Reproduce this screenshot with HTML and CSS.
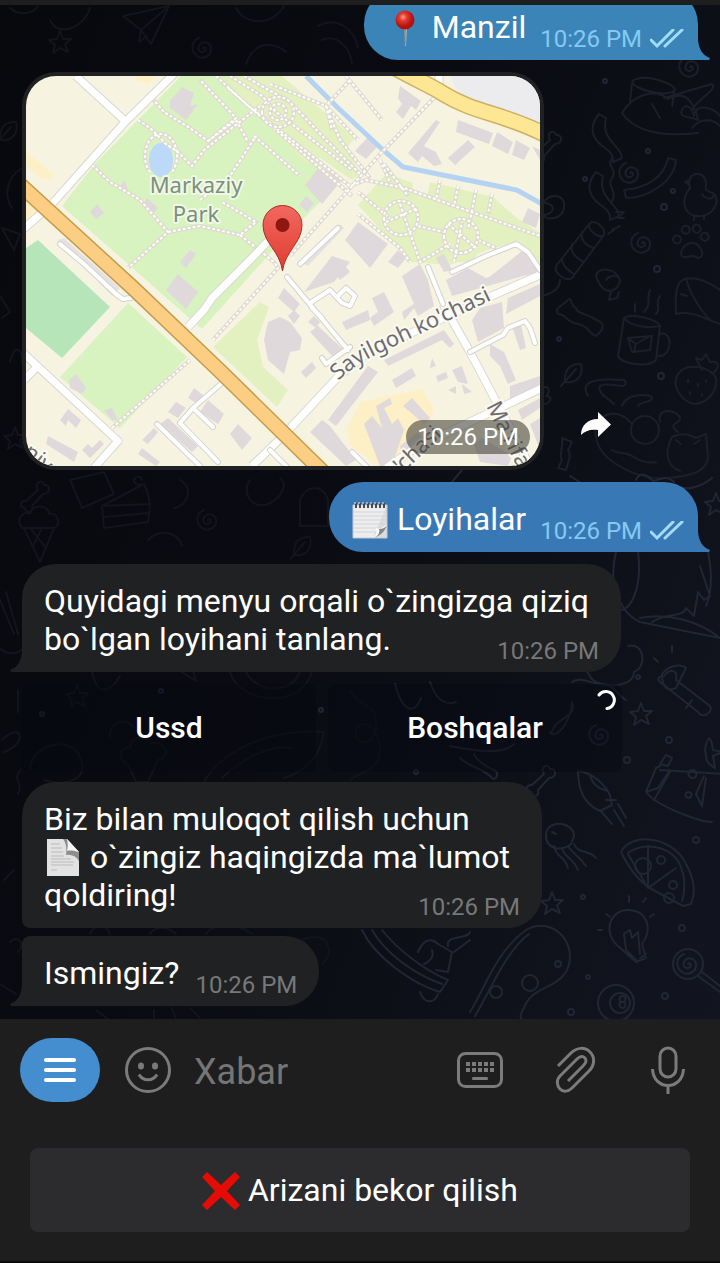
FILE: index.html
```html
<!DOCTYPE html>
<html lang="uz">
<head>
<meta charset="utf-8">
<meta name="viewport" content="width=device-width, initial-scale=1">
<title>Chat</title>
<link rel="stylesheet" href="styles.css">
</head>
<body>
<main class="app">
  <div class="topbar"></div>
  <section class="chat">
    <svg class="wallpaper" viewBox="0 5 720 1014" preserveAspectRatio="xMaxYMax slice" aria-hidden="true">
      <defs>
        <path id="d-star" d="M0-11 3-3 11-3 5 2 8 10 0 6-7 11-5 3-11-2-3-3Z"/>
        <path id="d-spiral" d="M0 0c2-2 4 1 2 3-4 3-8-1-6-5 3-6 11-4 12 2 1 8-8 12-14 8-7-5-6-15 2-18"/>
        <path id="d-bone" d="M-14 9-2-2C-7-10 3-13 4-7 11-8 11 2 3 2L-8 14C-6 22-15 21-15 16-21 16-20 8-14 9Z"/>
        <path id="d-leaf" d="M-8 10C-9-3-2-9 8-8 11 4 3 12-8 10ZM-12 14 3-3"/>
        <path id="d-ribbon" d="M-4-24c-12 14-6 26 6 34 6 4 9 8 8 14l9-4c0-12-22-18-16-40Z"/>
        <path id="d-paw" d="M0 1c7 0 13 10 9 14-5 3-5-2-9-1-4 0-7 3-10 0-3-5 3-13 10-13ZM-11-2a4 4 0 1 1 0-1M-4-9a4 4 0 1 1 1-1M7-10a4 4 0 1 1 1-1M15-2a4 4 0 1 1 1-1"/>
        <path id="d-plane" d="M-22-8 24-18 6 20-4 6ZM24-18-4 6-6 18 2 12"/>
        <path id="d-ice" d="M-14-4 2 30 16-4ZM-16-4c-8-10 4-18 8-14 2-10 18-10 19 0 10-2 12 12 5 14ZM-8-4 8 16M4-4-5 14"/>
        <path id="d-cake" d="M-24 0 18-22C24-10 25 0 22 16L-22 22ZM-24 0 24-2M-22 11 23 7M14-22a4 4 0 1 1 2-4"/>
      </defs>
      <g class="doodle doodle--dim">
        <path d="M10 8c8 8 24 6 28-2M90 8c-6 20-32 30-40 12M236 8c10 18 36 18 48-2"/>
        <use href="#d-plane" x="145" y="24"/><use href="#d-spiral" x="203" y="48"/>
        <path d="M246 64c8-22 26-24 40-12M318 26c18-10 36 2 40 22M322 40c14-6 28 6 30 24"/>
        <use href="#d-star" x="60" y="42"/><use href="#d-leaf" x="8" y="130"/>
        <path d="M22 168C6 178 4 196 12 208M2 228l18 6-6 16ZM0 296l10 16-8 6M10 362c6-22 14-10 12 2"/>
        <use href="#d-star" x="15" y="438"/><use href="#d-bone" x="40" y="492"/>
        <use href="#d-cake" x="126" y="506"/><use href="#d-spiral" x="208" y="520"/>
        <path d="M250 480c-10 14 4 30 18 24s20-20 12-26M300 500c6-16 24-16 28 0v26h-28Z"/>
        <path d="M70 480l34-8 10 22-32 14ZM180 480c14 8 8 26-6 28M148 540c12-12 30-8 34 6"/>
        <use href="#d-ice" x="38" y="532"/><use href="#d-leaf" x="302" y="545"/>
        <path d="M0 600l14 34M6 592l12 42M0 648c8 8 18 6 24 0M2 740c20-20 26 4 2 12M18 690v22M20 770c-8 12 4 12-2 24"/>
        <path d="M92 672c6 26 18 20 28 4M182 672l14 9-4-14M230 672c8 30 70 40 82 0M246 672c10 20 44 24 54 0"/>
        <use href="#d-star" x="77" y="696"/>
        <path d="M30 770c0-26 44-38 52-8 4 20-20 24-38 18M110 738c-2-16 16-22 24-10M128 764l8 18h12l10-22c16-4 4-22-8-16-4-10-20-8-20 4-12-2-12 14-2 16Z"/>
        <path d="M204 782c16-28 60-54 120-50-4 26-20 40-40 46M222 778c20-20 50-34 70-30"/>
        <path d="M350 690c10 20 28 12 26 36s-24 18-20 4 24-2 24 20-22 22-30 30"/>
        <path d="M90 934c6-12 16-10 20 0M150 934c4-8 18-8 26 0M206 934c6-10 30-12 46 0M4 880l10-10M0 984l16 10"/>
        <path d="M10 942c8-8 16 2 8 10M302 940c26-12 34 14 20 24M96 1010l12 9M154 1010v9M172 1008l4 11M190 1008l10 10"/>
      </g>
      <g class="doodle">
        <use href="#d-spiral" x="690" y="67"/>
        <path d="M632 82c6-10 42 0 43 8-8 8-40 0-43-8ZM632 84l-2 18M674 92l-2 14M622 113c12-20 34-24 46-14 18-10 26 4 30 20M622 113c14 20 42 24 76 20M652 104l8 14M664 98c14-4 40-12 48-14 6 6-14 14-20 26"/>
        <path d="M698 120c-8-4-20-2-16-10s10-2 12 6c2-14 20-8 26 0M692 128c8-10 20-10 28-2"/>
        <use href="#d-bone" x="552" y="142"/><use href="#d-ribbon" x="603" y="138"/>
        <use href="#d-ribbon" x="600" y="196"/>
        <path d="M668 158l8 2c-2 22-28 38-50 38l-2-8c22-2 40-12 44-32ZM612 158c-6 8 6 12 0 20s6 12 0 24"/>
        <use href="#d-spiral" x="630" y="173"/>
        <path d="M690 188c-6-16 16-20 16-4 0 4-2 6 4 8 14 4 4 26-12 24-14 0-18-16-8-28ZM690 180l-5 2 4 3M702 194c4 6 12 6 12 0M694 216v4M704 215v4"/>
        <path d="M544 202c4-8 22-10 20 6-2 12-18 12-20 8M542 215c14 0 14-12 2-12"/>
        <path d="M590 223c6-4 16 6 14 12L572 278c-6 4-18-4-16-12ZM590 223c-4 6 8 16 14 12M582 232c-2 8 4 14 12 16M572 244c-2 8 4 14 12 18M562 258c0 8 6 12 12 16M560 280c0 10-10 14-18 16"/>
        <path d="M616 212h8l-6 6h6M612 230l8-4M608 234l6-4"/>
        <use href="#d-spiral" x="642" y="243"/><use href="#d-paw" x="692" y="242"/>
        <path d="M596 276c2-10 20-8 24 4 0 10-16 20-24-4ZM606 280c2-4 10-6 13-2M611 292l-2 8 8-2 2-6"/>
        <path d="M568 300c4-4 2 6 8 8 0 6 14 6 20 12 8 2 10 8 0 16-8-2-6-10-18-12s-12-10-20-10c-4-6 4-8 10-14Z"/>
        <path d="M624 318c8-6 34 2 36 8l-4 34c-8 8-34 4-38-4ZM624 318c8 10 28 10 36 8M660 334c14-4 12 24-2 22M628 338l24-2-2 14-18 2ZM628 338l8 6 14-8M636 344l-2 8M644 312c8-8 2-14 6-22M656 314c6-6-2-10 4-18M635 312v-8"/>
        <path d="M720 290c-14-10-30-16-40-8-6 8-4 24-4 32 18-4 30 6 44 10M686 278c4 18 18 36 24 42M681 294l6 2"/>
        <use href="#d-leaf" x="573" y="372"/>
        <path d="M588 396c-8-14 4-18 36-16 4 4 0 6-2 6-16-2-28-4-20 8 4 4 8 6 12 10M622 406c4-14 30-12 30-8-2 6-10 2-14 8"/>
        <path d="M678 374c8-12 32-8 38 4 2 16-12 26-22 26-10-2-24-16-16-30ZM702 370l-6-12 6 2 4-6 4 8c10-2 10 6 2 12M688 380v2M698 384v2M706 380v2M690 392v2M702 394v2"/>
        <circle cx="645" cy="430" r="14"/>
        <path d="M660 422c-4-20 28-8 18 0-6 2-6 6 0 10M632 424c-16-20-40-8-36 12 2 24 40 44 70 42s40-8 42-20l-2-24-10 4c-10-6-18-4-24-1-10 20-2 30 8 34M676 440l5 4M694 444l6-4M612 450c6 4 14 2 20 6s14 8 24 6"/>
        <path d="M562 438l10 4-4 8c4 6 0 12-2 20l-8-2 4-8c-4-6 2-12 0-22Z"/>
        <path d="M540 390c8-8 12 2 6 6 8 0 4 8-2 8"/>
      </g>
      <g class="doodle doodle--bright">
        <path d="M636 480c4-10 12-4 16 0s12-8 22 2M674 484c10 8 26 4 38-6M452 482l10-12M570 476l16 10"/>
        <use href="#d-star" x="716" y="504"/>
        <path d="M616 552c-10 40 10 64 24 70l80 16M638 552c4 30-4 54-16 58M700 566l10 30-6 4-6-8-4 24-8-8c-2 10-20 4-34 14M708 552c4 20 4 40-2 54M640 618c30-6 60 4 80 20"/>
        <path d="M628 646c16-4 20 20 6 26 0 18-40 16-44 4-6-8-2-8-2-12M662 674c8-10 20-10 24-6l-10 20c-8 4-14 0-14-14ZM658 662l-4-4M672 652v-6"/>
        <path d="M664 676c8-10 14-4 12 4l34 26c4 6-8 14-12 6L660 682c-4-4 0-6 4-6M692 700l-6 8"/>
        <use href="#d-star" x="641" y="714"/><path d="M705 750c2-14 6-16 8 0l10 2-10 4 2 12c-10-6-8-8-10-18Z"/>
        <path d="M395 684c8 30 20 30 26 14M430 682c6 18 16 24 26 20M450 746c22 4 52 10 64-2M460 758c10 10 24 10 32 20 4 4 8-6 2-8s-18-10-20-16M552 732c4-16 26-14 20-30-2 24-18 38-22 30ZM572 682c10-6 18 2 30 2s14 10 24 16"/>
        <use href="#d-spiral" x="600" y="735"/><use href="#d-bone" x="546" y="776"/>
        <path d="M578 771c14 2 26 12 32 24l2 10-12 6c-14-6-22-20-22-40ZM590 775c2 8 8 14 18 16M600 810l12 14M614 810l10 16M606 800l10 0M618 804l8 14"/>
        <path d="M660 770 722 774M656 768l-10 24c10 14 54 30 66 30M670 772l-16 28M646 792l12-4 12-18M660 764l6-9 6 3-4 8ZM704 776l-8 18 6 12 4-28M656 768l4-2M692 778a4 4 0 1 1 1 0M688 798a3 3 0 1 1 1 0"/>
        <path d="M546 834c2-16 28-12 28 2l-3 8c-8 8-26 6-25-10ZM552 832l4 2M554 846c2 12 10 8 14 22M562 848c2 10 10 8 16 22M568 846c6 10 10 8 18 20M574 844c4 10 16 6 22 14"/>
        <path d="M621 852c10-20 50-16 64 10 8 14 12 28 6 42l-8 2-26-14c-16-8-26-20-36-40ZM628 853c20-14 50-4 54 18 4 8 2 24 0 30M648 846v42l28-20M648 888l-20-34"/>
        <circle cx="643" cy="866" r="8"/><circle cx="673" cy="885" r="4"/><circle cx="661" cy="860" r="4"/><circle cx="669" cy="898" r="5"/>
        <use href="#d-star" x="552" y="903"/>
        <path d="M618 946c-16-14-8-36 10-36s26 18 14 34l4 14-10 4ZM624 934l2 16 10 10M624 934l6-4 2 8 6-6 2 22M640 958l6-4M629 902v-6M610 917l-4-3M643 902l3-4M602 930h-4M650 917l4-3"/>
        <circle cx="688" cy="964" r="15"/><use href="#d-spiral" x="688" y="964"/><path d="M702 972l18 14M698 976l22 16"/>
        <circle cx="616" cy="1003" r="18"/><circle cx="620" cy="1003" r="10"/><path d="M622 1002a3 3 0 1 1 1 0a3 3 0 1 1-1 0"/>
        <path d="M470 1012c16-26 26-60 56-82 28-16 54 16 40 42-12 18-34 14-42 36-4 6-4 10-2 12M475 1016c16-26 30-64 54-82"/>
        <circle cx="530" cy="983" r="8"/><circle cx="496" cy="992" r="6"/>
        <path d="M362 930c12 26 50 54 78 62l8-12c-24-10-50-30-66-50M372 930c14 24 42 44 70 54M420 992c4 12 14 12 18 2M418 952c6-14 14-14 20-8l14 8-4 20-12-2M424 964c8-4 10-8 8-14M448 946c-2-12 20-6 22-14M454 952l16-12"/>
      </g>
      <g class="doodle doodle--bright">
        <circle cx="605" cy="81" r="2"/><circle cx="648" cy="151" r="2"/><circle cx="585" cy="179" r="2"/><circle cx="673" cy="191" r="2"/><circle cx="664" cy="207" r="3"/><circle cx="657" cy="269" r="3"/><circle cx="559" cy="339" r="2"/><circle cx="661" cy="376" r="3"/>
        <circle cx="669" cy="740" r="3"/><circle cx="627" cy="760" r="3"/><circle cx="416" cy="772" r="2"/><circle cx="696" cy="840" r="3"/><circle cx="583" cy="897" r="2"/><circle cx="682" cy="928" r="3"/><circle cx="558" cy="964" r="3"/><circle cx="588" cy="977" r="2"/><circle cx="665" cy="996" r="3"/><circle cx="571" cy="1012" r="3"/><circle cx="161" cy="691" r="2"/><circle cx="321" cy="710" r="2"/><circle cx="42" cy="714" r="2"/><circle cx="638" cy="677" r="2"/>
      </g>
    </svg>

    <div class="feed">
      <article class="bubble bubble--out bubble--first">
        <p class="bubble__text"><svg class="emoji" viewBox="0 0 38 38" role="img" aria-label="📍"><defs><radialGradient id="pinball" cx=".4" cy=".35"><stop offset="0" stop-color="#ff9a8a"/><stop offset=".4" stop-color="#e23b32"/><stop offset="1" stop-color="#b3120f"/></radialGradient></defs><path d="M18 17h3l-1 20h-1Z" fill="#b9b9bd"/><path d="M18 19h1v17" stroke="#77777c" fill="none"/><circle cx="19" cy="11" r="9.500" fill="url(#pinball)"/></svg> Manzil</p>
        <span class="meta">10:26 PM <svg class="checks" viewBox="0 0 34 20" role="img" aria-label="read"><path d="M1 11l6 6L23 1M15 17 32 1"/></svg></span>
        <svg class="tail" viewBox="0 0 12 20" aria-hidden="true"><path d="M0 0C1 9 4 15 12 18L11 20H0Z"/></svg>
      </article>

      <div class="map-row">
        <figure class="map-card">
          <svg class="map" viewBox="26 76 514 390" preserveAspectRatio="xMidYMid slice" role="img" aria-label="Markaziy Park">
            <rect class="m-land" x="26" y="76" width="514" height="390"/>
            <path fill="#ececef" d="M450 76h90v54l-40-18-40-14Z"/>
            <path fill="#fdf0c6" d="M26 152 54 174 50 181 40 178 26 166ZM136 76l20 0-8 8-14-4ZM26 196 40 210 26 224Z"/>
            <path fill="#fdf0c6" d="M360 402 422 389 434 408 424 440 378 466 350 445 347 428Z"/>
            <path class="m-park" d="M181 76h60L322 168 332 190 282 240 202 329 187 316 62 206 94 165Z"/>
            <path class="m-park" d="M128 303 187 357 120 428 60 377Z"/>
            <path fill="#b6e5b9" d="M38 240 110 307 62 358 26 328V248Z"/>
            <path class="m-grass" d="M224 76h58l73 62-7 8 12 28-8 6-32-22-14 6-50-50Z"/>
            <path class="m-grass" d="M260 302 269 307 257 340 263 367 288 390 277 407 213 347Z"/>
            <path class="m-grass" d="M358 205 387 173 413 183 412 193 427 197 430 182 493 197 517 218 540 233V258L517 242 487 250 450 265 410 262 393 243Z"/>
            <path class="m-grass" d="M455 262 478 252 474 262ZM540 240v24l-14-16Z"/>
            <path fill="#e4e1e0" d="M58 240 64 238 120 288 112 296ZM300 262 340 224 344 228 308 266Z"/>
            <path class="m-bldg" d="M170 101 182 87 194 93 190 106 198 104 186 120 170 108ZM97 204 104 213 96 219 90 212ZM124 180 128 190 118 190ZM147 198 158 208 152 214 142 206ZM190 250 196 254 186 268 180 262ZM178 274 198 292 186 309 166 290ZM305 185 320 166 342 180 322 204ZM306 196 314 203 307 212 299 205Z"/>
            <path class="m-bldg" d="M400 86 421 101 416 110 411 106 403 119 396 112 402 104 398 98ZM355 151 368 137 378 146 366 159ZM436 120 440 122 424 146 436 152 442 164 434 166 422 156 418 162 408 153ZM458 120 493 133 489 144 456 132ZM497 132 513 142 508 154 492 146ZM516 140 530 148 524 160 512 155ZM448 158 468 140 475 147 455 165ZM532 146 540 150V160ZM528 208 540 214 536 228 522 222Z"/>
            <path class="m-bldg" d="M345 240 358 222 388 244 370 268ZM388 262 398 250 406 258 398 268ZM436 258 444 254 452 270 444 272ZM488 278 526 248 536 262 488 282ZM304 292 332 256 350 262 334 282 322 286ZM334 272 344 264 350 272 340 280ZM278 298 284 288 300 304 294 312ZM372 298 384 292 394 312 374 326 370 318 378 312ZM342 322 368 310 370 320 346 330Z"/>
            <path class="m-bldg" d="M268 322 280 317 290 322 302 338 300 350 290 352 284 374 268 360 264 340ZM310 332 318 326 346 352 334 358ZM301 372 312 362 316 368 306 378ZM288 316 294 310 300 316 294 324ZM308 322 314 316 320 322 316 328ZM402 276 420 264 428 280 434 306 418 316 414 308 404 320 402 312 414 304Z"/>
            <path class="m-bldg" d="M446 280 468 268 486 278 538 262V272L452 296ZM508 298 540 284V296L506 314ZM472 320 480 308 502 302 504 328 478 342ZM384 360 444 330 454 344 450 348 442 340 388 366ZM328 420 368 366 378 372 336 426ZM392 380 412 368 416 376 396 388ZM432 358 436 366 430 368ZM452 370 462 366 468 384 458 382ZM436 376 446 372 448 378 438 382ZM448 390 456 386 456 394ZM462 384 472 392 464 394ZM490 344 504 352 516 380 508 384 500 366 490 356ZM512 326 520 320 526 348 520 350ZM510 386 540 376V388L510 400ZM518 410 540 398V408L522 420Z"/>
            <path class="m-bldg" d="M310 432 322 420 330 426 356 460 346 466ZM364 424 372 416 382 428 376 406 390 398 392 404 384 408 392 424 398 418 404 430 392 466H380ZM403 406 412 398 430 418 424 424ZM474 444 482 438 512 456 508 466 480 462ZM400 446 418 432 426 442 404 460ZM530 424 540 418V450Z"/>
            <path class="m-bldg" d="M69 380 76 374 86 388 82 394 70 388ZM104 410 112 408 118 420 112 420ZM60 420 68 409 81 420 76 428 68 420 66 426ZM48 436 78 452 74 462 46 444ZM82 450 88 444 92 448 100 440 104 444 90 458ZM142 440 154 428 158 432 148 444ZM138 454 142 448 160 462 156 466ZM168 412 176 402 186 408 178 418ZM188 398 194 388 204 396 198 404ZM160 424 168 418 198 446 192 452ZM200 412 208 400 224 414 218 424ZM230 434 238 424 252 438 242 450Z"/>
            <ellipse class="m-water" cx="161" cy="160" rx="12" ry="17"/>
            <path class="m-river" d="M306 76 337 107 383 150 403 167 517 190 542 204"/>
            <g class="m-path-case"><path id="walks" d="M152 98 164 112 190 128 208 141 236 118 200 80M138 120 150 128 166 144 178 152 192 166 204 150 260 106M208 141 236 120 248 142M92 165 110 182 140 200 168 232 128 268M168 232 200 226 240 235 256 222 222 202M240 235 274 262 278 268 213 340M112 428 190 360M150 172a16 22 0 1 1 22 0M200 200 230 176 256 136M254 136 300 176M216 76 246 104 350 186 366 180 404 188 460 208 540 236M230 76 262 96 276 112 352 170M244 76 290 102 326 140 362 176M270 84 326 106 358 140M228 88 352 196M350 80 326 106 332 130M346 76 382 120M434 98 382 152 290 256M326 106 340 140 370 178M380 160 390 182M384 164 408 196M440 180 436 200M458 186 454 206M476 190 468 230M492 194 488 214M358 192 392 220M418 226 444 232M478 240 496 248M358 214 400 248 410 262"/></g>
            <use class="m-path" href="#walks"/>
            <g class="m-path-case"><path id="rings" d="M270 112a8 8 0 1 0 16 0a8 8 0 1 0-16 0M262 112a16 15 0 1 0 32 0a16 15 0 1 0-32 0M384 218a17 17 0 1 0 34 0a17 17 0 1 0-34 0M444 236a17 17 0 1 0 34 0a17 17 0 1 0-34 0M400 204 420 262 450 244M386 222 418 208M454 262 462 222M448 224 476 248"/></g>
            <use class="m-path" href="#rings"/>
            <g class="m-road-case"><path id="roads" d="M176 72 125 122 52 204 20 232M76 76 124 120M20 350 118 441 94 468M37 367 24 380M270 239 250 260 212 298 204 310 188 327M252 466 282 437 337 378 366 354 487 298 542 274M443 304 470 352 497 403 532 470M542 388 470 422 417 447 386 468M439 72V90"/></g>
            <use class="m-road" href="#roads"/>
            <g class="m-lane-case"><path id="lanes" d="M60 244 84 264 117 295 123 299 131 298M222 383 193 408 180 423 218 462M193 408 213 427M157 424 200 466M270 450 290 470M287 277 348 350M322 358 326 364 350 347M310 303 330 290 342 303 350 306 355 296 346 288 338 296M312 308 322 318M470 352 503 335 508 328 525 321 530 328 535 343M428 267 443 304M338 228 300 264M352 452 370 470M452 272 486 256 516 244 528 252 540 270"/></g>
            <use class="m-lane" href="#lanes"/>
            <path fill="none" stroke="#cdb163" stroke-width="17" d="M388 64C420 82 432 86 442 93 476 114 500 112 544 134"/>
            <path fill="none" stroke="#fde795" stroke-width="14" d="M388 64C420 82 432 86 442 93 476 114 500 112 544 134"/>
            <path fill="none" stroke="#c49c4d" stroke-width="16" d="M16 181 133 288 220 371 325 474"/>
            <path fill="none" stroke="#fcce84" stroke-width="13" d="M16 181 133 288 220 371 325 474"/>
            <defs>
              <path id="p-sayilgoh" d="M338 381Q356 364 378 354L500 296"/>
              <path id="p-marifat" d="M486 406 530 492"/>
              <path id="p-chasi" d="M402 474 452 426"/>
              <path id="p-niy" d="M22 454 60 486"/>
            </defs>
            <g class="m-label">
              <text class="m-label--park" x="196" y="193" text-anchor="middle">Markaziy</text>
              <text class="m-label--park" x="196" y="222" text-anchor="middle">Park</text>
              <text><textPath href="#p-sayilgoh">Sayilgoh ko'chasi</textPath></text>
              <text><textPath href="#p-marifat">Ma'rifat</textPath></text>
              <text><textPath href="#p-chasi">'chasi</textPath></text>
              <text><textPath href="#p-niy">niy</textPath></text>
            </g>
            <defs><linearGradient id="marker" x2="0" y2="1"><stop offset="0" stop-color="#f2685f"/><stop offset="1" stop-color="#e03c31"/></linearGradient></defs>
            <path d="M282.500 271C280 251 263 243 263 225a19.500 19.500 0 0 1 39 0C302 243 285 251 282.500 271Z" fill="url(#marker)" stroke="#a63129"/>
            <circle cx="282.500" cy="225" r="7" fill="#8e1712"/>
          </svg>
          <figcaption class="map-card__time">10:26 PM</figcaption>
        </figure>
        <button class="share" type="button" aria-label="Share"><svg viewBox="0 0 30 26"><path d="M17 0 30 12.500 17 25V18C9 17 4 19 0 23 0 14 6 7 17 7Z"/></svg></button>
      </div>

      <article class="bubble bubble--out">
        <p class="bubble__text"><svg class="emoji" viewBox="0 0 38 38" role="img" aria-label="🗒️"><path d="M2 4h34v24q-4 6-13 9H2Z" fill="#ededee"/><path d="M36 4v33H22Z" fill="#dcdcde"/><path d="M2 11h34M2 15h34M2 19h34M2 23h34M2 27h32M2 31h27" stroke="#d2d5da" fill="none"/><path d="M20 37c8-3 5-7 5-10 4 2 8-1 11-4-1 7-7 12-16 14Z" fill="#fff"/><path d="M36 24c-2 7-8 12-15 13 7-1 8-7 7-9 3 0 6-1 8-4Z" fill="#85878a"/><path d="M2 37V4h34v33Z" fill="none" stroke="#c7c9cc"/><path d="M5 7V2M9 7V2M13 7V2M17 7V2M21 7V2M25 7V2M29 7V2M33 7V2" stroke="#45484d" stroke-width="2"/><path d="M4 3V1M8 3V1M12 3V1M16 3V1M20 3V1M24 3V1M28 3V1M32 3V1" stroke="#eee"/></svg> Loyihalar</p>
        <span class="meta">10:26 PM <svg class="checks" viewBox="0 0 34 20" role="img" aria-label="read"><path d="M1 11l6 6L23 1M15 17 32 1"/></svg></span>
        <svg class="tail" viewBox="0 0 12 20" aria-hidden="true"><path d="M0 0C1 9 4 15 12 18L11 20H0Z"/></svg>
      </article>

      <div class="group">
        <article class="bubble bubble--in bubble--multi">
          <p class="bubble__text">Quyidagi menyu orqali o`zingizga qiziq<br>bo`lgan loyihani tanlang.</p>
          <span class="meta">10:26 PM</span>
          <svg class="tail" viewBox="0 0 12 20" aria-hidden="true"><path d="M12 0C11 9 8 15 0 18L1 20H12Z"/></svg>
        </article>
        <div class="replies">
          <button class="reply" type="button">Ussd</button>
          <button class="reply" type="button">Boshqalar<svg class="spinner" viewBox="0 0 20 20" aria-hidden="true"><path d="M3 5A8.500 8.500 0 1 1 11 18.500"/></svg></button>
        </div>
      </div>

      <div class="group group--last">
        <article class="bubble bubble--in bubble--multi bubble--start">
          <p class="bubble__text">Biz bilan muloqot qilish uchun<br><svg class="emoji" viewBox="0 0 38 38" role="img" aria-label="📄"><path d="M3 0H23L35 13V37H3Z" fill="#e2e2e2"/><path d="M19 0h4L35 13v9c-3-5-8-7-13-6 1-7 0-12-3-16Z" fill="#8e8e8e"/><path d="M23 0 35 13c-4-1-8-2-12-1 1-4 1-8 0-12Z" fill="#f5f5f5"/><path d="M7 5h9M7 9h11M7 13h12M7 17h13M7 20h20M7 23h23M7 26h22M7 31h6" stroke="#bbb" fill="none"/></svg> o`zingiz haqingizda ma`lumot<br>qoldiring!</p>
          <span class="meta">10:26 PM</span>
        </article>
        <article class="bubble bubble--in bubble--end">
          <p class="bubble__text">Ismingiz?</p>
          <span class="meta">10:26 PM</span>
          <svg class="tail" viewBox="0 0 12 20" aria-hidden="true"><path d="M12 0C11 9 8 15 0 18L1 20H12Z"/></svg>
        </article>
      </div>
    </div>
  </section>

  <footer class="panel">
    <form class="composer">
      <button class="menu" type="button" aria-label="Menu"><svg viewBox="0 0 32 24"><path d="M2 2h28M2 12h28M2 22h28"/></svg></button>
      <button class="tool" type="button" aria-label="Emoji"><svg viewBox="0 0 48 48"><circle cx="24" cy="24" r="21.500"/><path d="M15 28.500c4 7 14 7 18 0"/><ellipse class="solid" cx="17" cy="20" rx="3" ry="3.500"/><ellipse class="solid" cx="31" cy="20" rx="3" ry="3.500"/></svg></button>
      <input class="field" type="text" aria-label="Xabar" placeholder="Xabar">
      <div class="tools">
        <button class="tool" type="button" aria-label="Keyboard"><svg viewBox="0 0 48 48"><rect x="2.500" y="7.500" width="43" height="33" rx="7"/><path class="solid" d="M10 16h4v4h-4ZM16 16h4v4h-4ZM22 16h4v4h-4ZM28 16h4v4h-4ZM34 16h4v4h-4ZM10 22h4v4h-4ZM16 22h4v4h-4ZM22 22h4v4h-4ZM28 22h4v4h-4ZM34 22h4v4h-4ZM17 31h14q1 0 1 1.500t-1 1.500H17q-1 0-1-1.500t1-1.500Z"/></svg></button>
        <button class="tool" type="button" aria-label="Attach"><svg viewBox="0 0 48 48"><path d="M8 20 21 7C27 1 35 1 40 6S45 19 39 25L22 42C18 46 13 46 10 43S6 34 10 30L27 13C30 10 33 10 35 12S36 17 33 20L18 35"/></svg></button>
        <button class="tool" type="button" aria-label="Voice"><svg viewBox="0 0 48 48"><rect x="16" y="2" width="16" height="29" rx="8"/><path d="M8.500 23c1 22 30 22 31 0M24 39v9"/></svg></button>
      </div>
    </form>
    <div class="keyboard">
      <button class="key" type="button"><svg class="emoji" viewBox="0 0 38 38" role="img" aria-label="❌"><path d="M5 0 19 13 33 0 38 5 25 19 38 33 33 38 19 25 5 38 0 33 13 19 0 5Z" fill="#e60c05"/></svg> Arizani bekor qilish</button>
    </div>
  </footer>
</main>
</body>
</html>
```
FILE: styles.css
```css
* { box-sizing: border-box; }

body {
  margin: 0;
  background: #0a0b10;
  color: #fff;
  font-family: Roboto, "Liberation Sans", sans-serif;
  font-size: 32px;
  line-height: 38px;
}

button {
  border: 0;
  padding: 0;
  background: none;
  color: inherit;
  font: inherit;
  cursor: pointer;
}

.app {
  display: flex;
  flex-direction: column;
  height: 100vh;
}

.topbar {
  flex: none;
  height: 5px;
  background: #1e1e1e;
}

/* Chat area */
.chat {
  position: relative;
  display: flex;
  flex: 1;
  flex-direction: column;
  justify-content: flex-end;
  min-height: 0;
  overflow: hidden;
  background: linear-gradient(110deg, #08090d 0%, #0a0b12 45%, #121520 100%);
}

.wallpaper {
  position: absolute;
  inset: 0;
  width: 100%;
  height: 100%;
}

.doodle {
  fill: none;
  stroke: #1c1e2a;
  stroke-width: 2;
  stroke-linejoin: round;
  stroke-linecap: round;
}
.doodle--dim { stroke: #13141c; }
.doodle--bright { stroke: #222533; }

.feed {
  position: relative;
  display: flex;
  flex-direction: column;
  gap: 12px;
  padding: 0 22px 13px;
}

.group {
  display: flex;
  flex-direction: column;
  gap: 12px;
}
.group--last {
  gap: 8px;
  margin-top: -2px;
}

/* Message bubbles */
.bubble {
  position: relative;
  display: flex;
  align-items: flex-end;
  gap: 16px;
  max-width: 100%;
  padding: 18px 22px 14px;
  border-radius: 34px;
}
.bubble--in {
  align-self: flex-start;
  background: #202122;
  border-bottom-left-radius: 0;
}
.bubble--out {
  align-self: flex-end;
  gap: 14px;
  padding-right: 14px;
  background: #3879b5;
  border-bottom-right-radius: 0;
}
.bubble--first { background: #3a84b8; }
.bubble--start { border-bottom-left-radius: 8px; }
.bubble--end { border-top-left-radius: 8px; }

.bubble--multi { display: grid; }
.bubble--multi > .bubble__text,
.bubble--multi > .meta { grid-area: 1 / 1; }
.bubble--multi > .bubble__text { padding-right: 10px; }
.bubble--multi > .meta {
  align-self: end;
  justify-self: end;
}

.bubble__text { margin: 0; }

.emoji {
  width: 38px;
  height: 38px;
  vertical-align: -5px;
  margin: -4px 0;
}

.meta {
  display: flex;
  align-items: center;
  gap: 8px;
  margin-bottom: -7px;
  color: #77787a;
  font-size: 24px;
  line-height: 28px;
  white-space: nowrap;
}
.bubble--out .meta { color: #85c9f3; }

.checks {
  width: 34px;
  height: 20px;
  fill: none;
  stroke: #a3dcf7;
  stroke-width: 3;
  stroke-linecap: round;
}

.tail {
  position: absolute;
  bottom: 0;
  width: 12px;
  height: 20px;
}
.bubble--out .tail { left: 100%; fill: #3879b5; }
.bubble--first .tail { fill: #3a84b8; }
.bubble--in .tail { right: 100%; fill: #202122; }

/* Location message */
.map-row {
  display: flex;
  align-items: flex-end;
  gap: 37px;
}

.map-card {
  position: relative;
  flex: 0 1 522px;
  margin: 0;
  padding: 4px;
  border-radius: 34px;
  background: #202122;
}

.map {
  display: block;
  width: 100%;
  border-radius: 30px;
}

.map-card__time {
  position: absolute;
  right: 14px;
  bottom: 16px;
  padding: 3px 11px;
  border-radius: 17px;
  background: rgba(70, 68, 60, 0.6);
  font-size: 24px;
  line-height: 28px;
}

/* Map layers: every way is drawn as a wide casing with a lighter line over it */
.m-land { fill: #f6f4e0; }
.m-park { fill: #d8f2c0; }
.m-grass { fill: #e3f0c0; }
.m-bldg { fill: #dfd9dc; }
.m-water { fill: #bdd9fa; }
.m-river { fill: none; stroke: #b4d2f1; stroke-width: 5; }
.m-path-case { fill: none; stroke: #dfdacf; stroke-width: 4; }
.m-path { fill: none; stroke: #fff; stroke-width: 2; stroke-dasharray: 3 2; }
.m-road-case { fill: none; stroke: #dad7d2; stroke-width: 9; stroke-linejoin: round; }
.m-road { fill: none; stroke: #fff; stroke-width: 7; stroke-linejoin: round; }
.m-lane-case { fill: none; stroke: #d6d2d0; stroke-width: 6; stroke-linejoin: round; stroke-linecap: round; }
.m-lane { fill: none; stroke: #fff; stroke-width: 4; stroke-linejoin: round; stroke-linecap: round; }
.m-label {
  fill: #6d6b70;
  stroke: #fbfaf0;
  stroke-width: 4;
  stroke-linejoin: round;
  paint-order: stroke;
  font-family: "Noto Sans", "Open Sans", sans-serif;
  font-size: 22px;
}
.m-label--park { fill: #7c8f7e; stroke: #eff9e4; }

.share {
  width: 30px;
  height: 26px;
  margin-bottom: 32px;
}
.share svg { display: block; fill: #fff; }

/* Inline reply buttons */
.replies {
  display: grid;
  grid-template-columns: 1fr 1fr;
  gap: 12px;
  width: 100%;
  max-width: 600px;
}
.reply {
  position: relative;
  height: 88px;
  border-radius: 8px;
  background: rgba(6, 8, 18, 0.4);
  font-size: 30px;
  font-weight: 500;
}
.spinner {
  position: absolute;
  top: 6px;
  right: 6px;
  width: 20px;
  height: 20px;
  fill: none;
  stroke: #fff;
  stroke-width: 3;
  stroke-linecap: round;
}

/* Bottom panel */
.panel {
  flex: none;
  border-bottom: 2px solid #0b0b0b;
  background: #1e1e1e;
}

.composer {
  display: flex;
  align-items: center;
  gap: 24px;
  padding: 19px 28px 19px 20px;
}

.menu {
  display: grid;
  flex: none;
  place-items: center;
  width: 80px;
  height: 64px;
  border-radius: 32px;
  background: #448dce;
}
.menu svg {
  width: 32px;
  height: 24px;
  stroke: #fff;
  stroke-width: 4;
  stroke-linecap: round;
}

.tool {
  flex: none;
  width: 48px;
  height: 48px;
}
.tool svg {
  display: block;
  fill: none;
  stroke: #7b7b7b;
  stroke-width: 3;
}
.tool .solid { fill: #7b7b7b; stroke: none; }

.tools {
  display: flex;
  flex: none;
  gap: 46px;
}

.field {
  flex: 1;
  min-width: 0;
  height: 48px;
  margin-left: -2px;
  padding: 4px 0 0;
  border: 0;
  outline: 0;
  background: none;
  color: #fff;
  font: inherit;
  font-size: 36px;
}
.field::placeholder { color: #757575; opacity: 1; }

.keyboard { padding: 27px 30px 29px; }
.key {
  display: block;
  width: 100%;
  height: 84px;
  border-radius: 8px;
  background: #2c2c2e;
}
```
